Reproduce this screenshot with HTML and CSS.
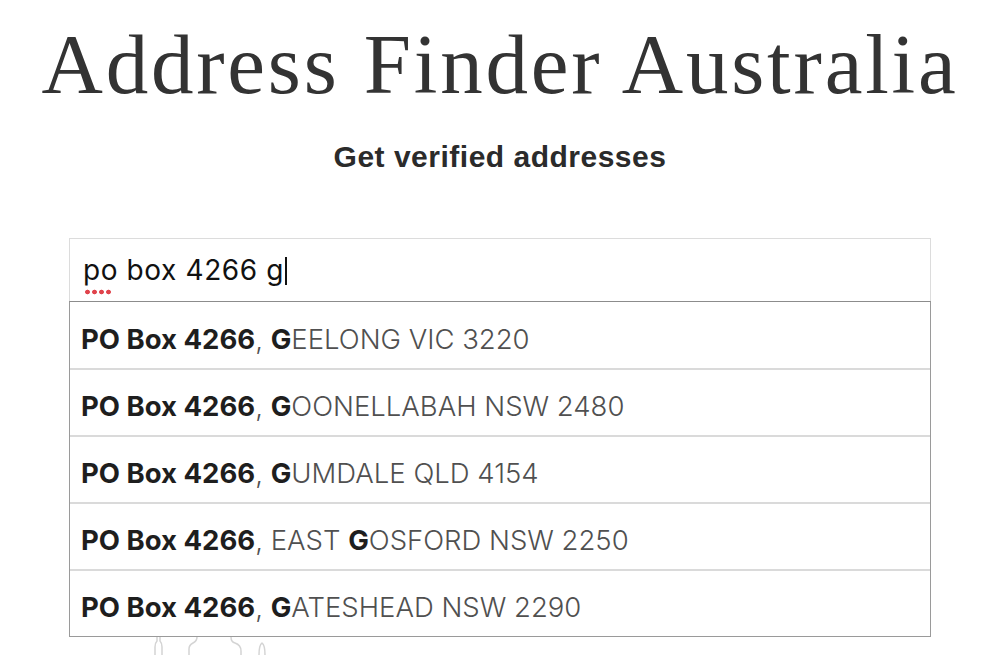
FILE: index.html
```html
<!DOCTYPE html>
<html lang="en">
<head>
<meta charset="utf-8">
<title>Address Finder Australia</title>
<link rel="stylesheet" href="styles.css">
</head>
<body>
  <main class="page">
    <h1 class="title">Address Finder Australia</h1>
    <p class="subtitle">Get verified addresses</p>
    <div class="finder">
      <div class="search"><span class="misspelt">po</span> box 4266 g<span class="caret"></span></div>
      <ul class="results">
        <li class="result"><b>PO Box 4266</b>, <b>G</b>EELONG VIC 3220</li>
        <li class="result"><b>PO Box 4266</b>, <b>G</b>OONELLABAH NSW 2480</li>
        <li class="result"><b>PO Box 4266</b>, <b>G</b>UMDALE QLD 4154</li>
        <li class="result"><b>PO Box 4266</b>, EAST <b>G</b>OSFORD NSW 2250</li>
        <li class="result"><b>PO Box 4266</b>, <b>G</b>ATESHEAD NSW 2290</li>
      </ul>
      <svg class="backdrop" width="200" height="18" viewBox="0 0 200 18" aria-hidden="true">
        <path d="M26 18 V10 Q26 6 28 4 V0 M31 0 V4 Q33 6 33 10 V18" />
        <path d="M60 18 V12 Q60 8 64 6 Q68 4 68 0" />
        <path d="M102 0 Q102 5 106 6 Q112 8 112 14 V18" />
        <path d="M130 18 Q130 8 133 6 Q136 8 136 18" />
      </svg>
    </div>
  </main>
</body>
</html>
```
FILE: styles.css
```css
html, body {
  margin: 0;
  padding: 0;
  background: #ffffff;
}

.page {
  width: 1000px;
  height: 655px;
  overflow: hidden;
  display: flex;
  flex-direction: column;
  align-items: center;
}

.title {
  margin: 22px 0 0;
  font-family: "Liberation Serif", "Times New Roman", serif;
  font-weight: 400;
  font-size: 85px;
  line-height: 85px;
  letter-spacing: 2.8px;
  color: #333333;
}

.subtitle {
  margin: 35px 0 0;
  font-family: "Liberation Sans", Arial, sans-serif;
  font-weight: 700;
  font-size: 30px;
  line-height: 30px;
  letter-spacing: 0.5px;
  color: #2b2b2b;
}

.finder {
  width: 862px;
  margin-top: 66px;
  display: flex;
  flex-direction: column;
}

.search {
  height: 62px;
  border: 1px solid #dcdcdc;
  border-bottom: none;
  padding-left: 13px;
  display: flex;
  align-items: center;
  font-family: Inter, "Liberation Sans", sans-serif;
  font-weight: 400;
  font-size: 28px;
  letter-spacing: 0.6px;
  color: #111111;
  white-space: pre;
}

.misspelt {
  position: relative;
}

.misspelt::after {
  content: "";
  position: absolute;
  left: 1px;
  width: 28px;
  bottom: -8px;
  height: 6px;
  background-image: radial-gradient(circle at 50% 50%, #e0444c 0, #e0444c 2px, transparent 2.7px);
  background-size: 7px 6px;
  background-repeat: repeat-x;
}

.caret {
  display: inline-block;
  width: 1.5px;
  height: 28px;
  background: #111111;
  margin-left: 1px;
  margin-top: 2px;
}

.results {
  list-style: none;
  margin: 0;
  padding: 0;
  border: 1px solid #9a9a9a;
  border-top-color: #8c8c8c;
}

.result {
  height: 67px;
  box-sizing: border-box;
  padding: 21px 0 0 11px;
  font-family: Inter, "Liberation Sans", sans-serif;
  font-weight: 300;
  font-size: 27.5px;
  line-height: 32px;
  color: #505050;
  white-space: nowrap;
}

.result + .result {
  border-top: 2px solid #dadada;
  padding-top: 20px;
}

.result:first-child {
  height: 66px;
}

.result b {
  font-weight: 700;
  color: #1e1e1e;
}

.backdrop {
  margin-left: 60px;
  fill: none;
  stroke: #d4d4d4;
  stroke-width: 1.5;
}
```
